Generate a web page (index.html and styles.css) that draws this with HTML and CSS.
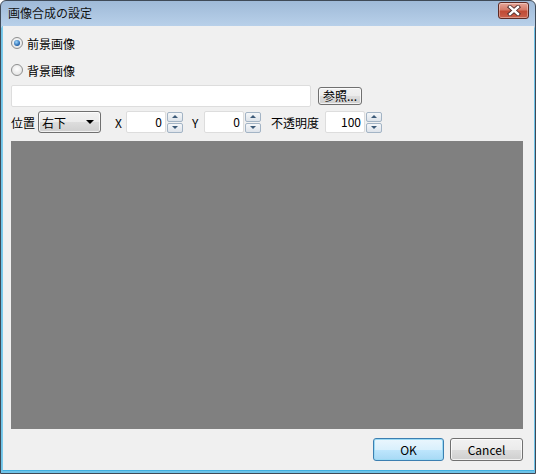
FILE: index.html
```html
<!DOCTYPE html>
<html lang="ja">
<head>
<meta charset="utf-8">
<title>画像合成の設定</title>
<link rel="stylesheet" href="styles.css">
</head>
<body>
<div class="window">
  <div class="titlebar">
    <span class="title">画像合成の設定</span>
    <button class="close" aria-label="閉じる">
      <svg width="16" height="11" viewBox="0 0 16 11">
        <path d="M4 2 L12 9 M12 2 L4 9" stroke="#4a2a2a" stroke-width="4.2" stroke-linecap="square" fill="none"/>
        <path d="M4 2 L12 9 M12 2 L4 9" stroke="#ffffff" stroke-width="2.4" stroke-linecap="square" fill="none"/>
      </svg>
    </button>
  </div>
  <div class="client">
    <label class="radio-row"><span class="radio checked"></span><span>前景画像</span></label>
    <label class="radio-row"><span class="radio"></span><span>背景画像</span></label>
    <div class="file-row">
      <div class="textbox wide"></div>
      <button class="btn browse">参照...</button>
    </div>
    <div class="pos-row">
      <span class="lbl">位置</span>
      <div class="combo"><span>右下</span><span class="arrow"></span></div>
      <span class="lbl xlbl">X</span>
      <div class="spin"><div class="textbox num">0</div><div class="spinbtns"><span class="sb up"></span><span class="sb down"></span></div></div>
      <span class="lbl ylbl">Y</span>
      <div class="spin"><div class="textbox num">0</div><div class="spinbtns"><span class="sb up"></span><span class="sb down"></span></div></div>
      <span class="lbl olbl">不透明度</span>
      <div class="spin"><div class="textbox num">100</div><div class="spinbtns"><span class="sb up"></span><span class="sb down"></span></div></div>
    </div>
    <div class="preview"></div>
    <div class="footer">
      <button class="btn dlg default">OK</button>
      <button class="btn dlg">Cancel</button>
    </div>
  </div>
</div>
</body>
</html>
```

FILE: styles.css
```css
* { box-sizing: border-box; }
html, body { margin: 0; padding: 0; background: #ffffff; }
body {
  font-family: "Noto Sans CJK JP", "Noto Sans", sans-serif;
  font-size: 12px;
  color: #000;
}
.window {
  width: 536px;
  height: 474px;
  border: 1px solid #3f4a57;
  border-radius: 6px 6px 0 0;
  background: linear-gradient(#9fbad8, #b9d1ea 26px, #6fc3e8 27px);
  display: flex;
  flex-direction: column;
  padding: 0 1px 2px 1px;
  overflow: hidden;
}
.titlebar {
  height: 25px;
  flex: none;
  display: flex;
  align-items: center;
  justify-content: space-between;
  padding: 0 5px 0 6px;
}
.title {
  font-size: 12px;
  color: #111;
  line-height: 1;
  margin-top: -1px;
}
.close {
  width: 31px;
  height: 17px;
  margin-top: -6px;
  border: 1px solid #5d2a24;
  border-radius: 3px;
  background: linear-gradient(#e6a79a, #d47a68 45%, #c04a35 55%, #c9604b);
  box-shadow: inset 0 0 0 1px rgba(255,255,255,0.35);
  padding: 0;
  display: flex;
  align-items: center;
  justify-content: center;
}
.client {
  flex: 1;
  background: #f0f0f0;
  border-left: 1px solid #7fcbea;
  border-bottom: 1px solid #3fb0e0;
  padding: 7px 11px 8px 7px;
  display: flex;
  flex-direction: column;
}
.radio-row {
  height: 20px;
  display: flex;
  align-items: center;
  gap: 4px;
  margin-left: 1px;
}
.radio-row + .radio-row { margin-top: 7px; }
.radio {
  width: 12px;
  height: 12px;
  border-radius: 50%;
  border: 1px solid #8e8f8f;
  background: radial-gradient(circle at 50% 40%, #ffffff, #dcdcdc);
  display: flex;
  align-items: center;
  justify-content: center;
}
.radio.checked::after {
  content: "";
  width: 6px;
  height: 6px;
  border-radius: 50%;
  background: radial-gradient(circle at 40% 35%, #9fd8ff, #1d5fa8 70%, #0b3c7a);
}
.file-row {
  margin-top: 5px;
  height: 22px;
  display: flex;
  align-items: center;
  gap: 7px;
}
.textbox {
  background: #fff;
  border: 1px solid #dddddd;
  border-radius: 2px;
  height: 22px;
}
.wide { width: 300px; margin-left: 1px; }
.btn {
  font-family: inherit;
  font-size: 12px;
  color: #000;
  border: 1px solid #707070;
  border-radius: 3px;
  background: linear-gradient(#f2f2f2, #ebebeb 50%, #dddddd 51%, #cfcfcf);
  box-shadow: inset 0 0 0 1px rgba(255,255,255,0.7);
  padding: 0;
  line-height: 1;
}
.browse { width: 44px; height: 18px; }
.pos-row {
  margin-top: 4px;
  height: 22px;
  display: flex;
  align-items: center;
}
.lbl { margin-left: 1px; }
.combo {
  margin-left: 3px;
  width: 63px;
  height: 22px;
  border: 1px solid #707070;
  border-radius: 3px;
  background: linear-gradient(#f2f2f2, #ebebeb 50%, #dddddd 51%, #cfcfcf);
  box-shadow: inset 0 0 0 1px rgba(255,255,255,0.7);
  display: flex;
  align-items: center;
  justify-content: space-between;
  padding: 0 6px 0 3px;
}
.arrow {
  width: 0;
  height: 0;
  border-left: 4px solid transparent;
  border-right: 4px solid transparent;
  border-top: 4px solid #000;
}
.xlbl { margin-left: 14px; width: 11px; }
.ylbl { margin-left: 9px; width: 12px; }
.olbl { margin-left: 10px; width: 54px; }
.spin {
  display: flex;
  align-items: center;
  gap: 1px;
}
.num {
  width: 40px;
  text-align: right;
  padding-right: 3px;
  line-height: 20px;
}
.spinbtns {
  display: flex;
  flex-direction: column;
  gap: 1px;
  width: 16px;
}
.sb {
  height: 10px;
  border: 1px solid #a3b4c5;
  border-radius: 2px;
  background: linear-gradient(#f5f7f9, #dde3ea);
  display: flex;
  align-items: center;
  justify-content: center;
}
.sb.up::after {
  content: "";
  border-left: 3px solid transparent;
  border-right: 3px solid transparent;
  border-bottom: 3px solid #3c5a78;
}
.sb.down::after {
  content: "";
  border-left: 3px solid transparent;
  border-right: 3px solid transparent;
  border-top: 3px solid #3c5a78;
}
.preview {
  margin-top: 8px;
  margin-left: 1px;
  height: 288px;
  background: #808080;
}
.footer {
  margin-top: 9px;
  display: flex;
  justify-content: flex-end;
  gap: 6px;
}
.dlg { height: 23px; width: 73px; }
.default {
  width: 71px;
  border-color: #3c7fb1;
  background: linear-gradient(#eaf6fd, #d9f0fc 50%, #bee6fd 51%, #a7d9f5);
  box-shadow: inset 0 0 0 1px #9cdaf4;
}
```
